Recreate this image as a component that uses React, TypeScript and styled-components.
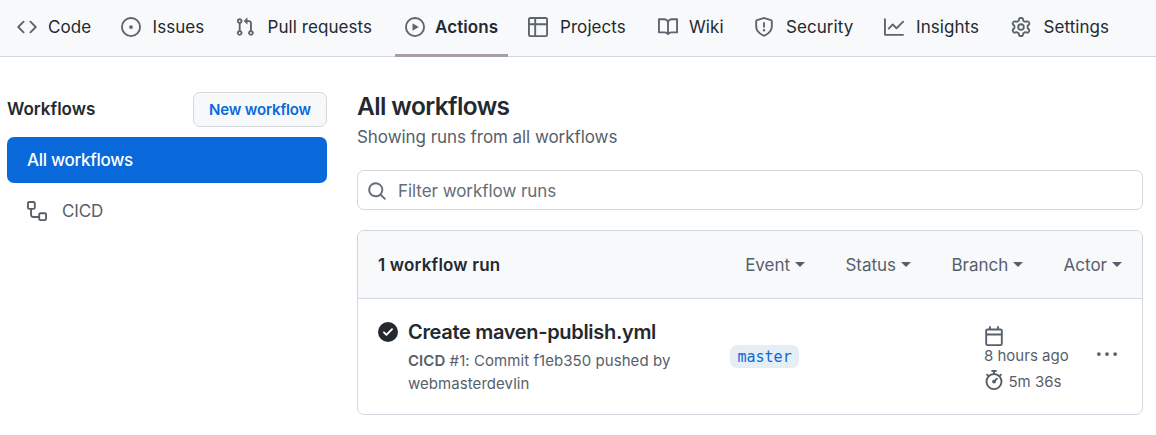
import React from "react";
import styled, { createGlobalStyle } from "styled-components";

const GlobalStyle = createGlobalStyle`
  * { box-sizing: border-box; }
  body {
    margin: 0;
    background: #fff;
    color: #24292f;
    font-family: Inter, "Liberation Sans", sans-serif;
    font-size: 17px;
    -webkit-font-smoothing: antialiased;
  }
  h1, h2, p { margin: 0; }
  button { font-family: inherit; }
`;

const paths = {
  code: "M4.72 3.22a.75.75 0 011.06 1.06L2.06 8l3.72 3.72a.75.75 0 11-1.06 1.06L.47 8.53a.75.75 0 010-1.06l4.25-4.25zm6.56 0a.75.75 0 10-1.06 1.06L13.94 8l-3.72 3.72a.75.75 0 101.06 1.06l4.25-4.25a.75.75 0 000-1.06l-4.25-4.25z",
  issue: "M8 9.5a1.5 1.5 0 100-3 1.5 1.5 0 000 3zM8 0a8 8 0 100 16A8 8 0 008 0zM1.5 8a6.5 6.5 0 1113 0 6.5 6.5 0 01-13 0z",
  pull: "M7.177 3.073L9.573.677A.25.25 0 0110 .854v4.792a.25.25 0 01-.427.177L7.177 3.427a.25.25 0 010-.354zM3.75 2.5a.75.75 0 100 1.5.75.75 0 000-1.5zm-2.25.75a2.25 2.25 0 113 2.122v5.256a2.251 2.251 0 11-1.5 0V5.372A2.25 2.25 0 011.5 3.25zM11 2.5h-1V4h1a1 1 0 011 1v5.628a2.251 2.251 0 101.5 0V5A2.5 2.5 0 0011 2.5zm1 10.25a.75.75 0 111.5 0 .75.75 0 01-1.5 0zM3.75 12a.75.75 0 100 1.5.75.75 0 000-1.5z",
  play: "M1.5 8a6.5 6.5 0 1113 0 6.5 6.5 0 01-13 0zM8 0a8 8 0 100 16A8 8 0 008 0zM6.379 5.227A.25.25 0 006 5.442v5.117a.25.25 0 00.379.214l4.264-2.559a.25.25 0 000-.428L6.379 5.227z",
  table: "M0 1.75C0 .784.784 0 1.75 0h12.5C15.216 0 16 .784 16 1.75v12.5A1.75 1.75 0 0114.25 16H1.75A1.75 1.75 0 010 14.25V1.75zM1.5 6.5v7.75c0 .138.112.25.25.25H5v-8H1.5zM5 5H1.5V1.75a.25.25 0 01.25-.25H5V5zm1.5 1.5v8h7.75a.25.25 0 00.25-.25V6.5h-8zm8-1.5h-8V1.5h7.75a.25.25 0 01.25.25V5z",
  book: "M0 1.75A.75.75 0 01.75 1h4.253c1.227 0 2.317.59 3 1.501A3.744 3.744 0 0111.006 1h4.245a.75.75 0 01.75.75v10.5a.75.75 0 01-.75.75h-4.507a2.25 2.25 0 00-1.591.659l-.622.621a.75.75 0 01-1.06 0l-.622-.621A2.25 2.25 0 005.258 13H.75a.75.75 0 01-.75-.75V1.75zm8.755 3a2.25 2.25 0 012.25-2.25H14.5v9h-3.757c-.71 0-1.4.201-1.992.572l.004-7.322zm-1.504 7.324l.004-5.073-.002-2.253A2.25 2.25 0 005.003 2.5H1.5v9h3.757a3.75 3.75 0 011.994.574z",
  shield: "M7.467.133a1.75 1.75 0 011.066 0l5.25 1.68A1.75 1.75 0 0115 3.48V7c0 1.566-.32 3.182-1.303 4.682-.983 1.498-2.585 2.813-5.032 3.855a1.7 1.7 0 01-1.33 0c-2.447-1.042-4.049-2.357-5.032-3.855C1.32 10.182 1 8.566 1 7V3.48a1.75 1.75 0 011.217-1.667l5.25-1.68zm.61 1.429a.25.25 0 00-.153 0l-5.25 1.68a.25.25 0 00-.174.238V7c0 1.358.275 2.666 1.057 3.86.784 1.194 2.121 2.34 4.366 3.297a.2.2 0 00.154 0c2.245-.956 3.582-2.104 4.366-3.298C13.225 9.666 13.5 8.36 13.5 7V3.48a.25.25 0 00-.174-.237l-5.25-1.68zM9 10.5a1 1 0 11-2 0 1 1 0 012 0zm-.25-5.75a.75.75 0 10-1.5 0v3a.75.75 0 001.5 0v-3z",
  graph: "M1.5 1.75a.75.75 0 00-1.5 0v12.5c0 .414.336.75.75.75h14.5a.75.75 0 000-1.5H1.5V1.75zm14.28 2.53a.75.75 0 00-1.06-1.06L10 7.94 7.53 5.47a.75.75 0 00-1.06 0L3.22 8.72a.75.75 0 001.06 1.06L7 7.06l2.47 2.47a.75.75 0 001.06 0l5.25-5.25z",
  gear: "M7.429 1.525a6.593 6.593 0 011.142 0c.036.003.108.036.137.146l.289 1.105c.147.56.55.967.997 1.189.174.086.341.183.501.29.417.278.97.423 1.53.27l1.102-.303c.11-.03.175.016.195.046.219.31.41.641.573.989.014.031.022.11-.059.19l-.815.806c-.411.406-.562.957-.53 1.456a4.588 4.588 0 010 .582c-.032.499.119 1.05.53 1.456l.815.806c.08.08.073.159.059.19a6.494 6.494 0 01-.573.99c-.02.029-.086.074-.195.045l-1.103-.303c-.559-.153-1.112-.008-1.529.27-.16.107-.327.204-.5.29-.449.222-.851.628-.998 1.189l-.289 1.105c-.029.11-.101.143-.137.146a6.613 6.613 0 01-1.142 0c-.036-.003-.108-.037-.137-.146l-.289-1.105c-.147-.56-.55-.967-.997-1.189a4.502 4.502 0 01-.501-.29c-.417-.278-.97-.423-1.53-.27l-1.102.303c-.11.03-.175-.016-.195-.046a6.492 6.492 0 01-.573-.989c-.014-.031-.022-.11.059-.19l.815-.806c.411-.406.562-.957.53-1.456a4.587 4.587 0 010-.582c.032-.499-.119-1.05-.53-1.456l-.815-.806c-.08-.08-.073-.159-.059-.19a6.44 6.44 0 01.573-.99c.02-.029.086-.075.195-.045l1.103.303c.559.153 1.112.008 1.529-.27.16-.107.327-.204.5-.29.449-.222.851-.628.998-1.189l.289-1.105c.029-.11.101-.143.137-.146zM8 0c-.236 0-.47.01-.701.03-.743.065-1.29.615-1.458 1.261l-.29 1.106c-.017.066-.078.158-.211.224a5.994 5.994 0 00-.668.386c-.123.082-.233.09-.3.071L3.27 2.776c-.644-.177-1.392.02-1.82.63a7.977 7.977 0 00-.704 1.217c-.315.675-.111 1.422.363 1.891l.815.806c.05.048.098.147.088.294a6.084 6.084 0 000 .772c.01.147-.038.246-.088.294l-.815.806c-.474.469-.678 1.216-.363 1.891.2.428.436.835.704 1.218.428.609 1.176.806 1.82.63l1.103-.303c.066-.019.176-.011.299.071.213.143.436.272.668.386.133.066.194.158.212.224l.289 1.106c.169.646.715 1.196 1.458 1.26a8.094 8.094 0 001.402 0c.743-.064 1.29-.614 1.458-1.26l.29-1.106c.017-.066.078-.158.211-.224a5.98 5.98 0 00.668-.386c.123-.082.233-.09.3-.071l1.102.302c.644.177 1.392-.02 1.82-.63.268-.382.505-.789.704-1.217.315-.675.111-1.422-.364-1.891l-.814-.806c-.05-.048-.098-.147-.088-.294a6.1 6.1 0 000-.772c-.01-.147.039-.246.088-.294l.814-.806c.475-.469.679-1.216.364-1.891a7.992 7.992 0 00-.704-1.218c-.428-.609-1.176-.806-1.82-.63l-1.103.303c-.066.019-.176.011-.299-.071a5.991 5.991 0 00-.668-.386c-.133-.066-.194-.158-.212-.224L10.16 1.29C9.99.645 9.444.095 8.701.031A8.094 8.094 0 008 0zm1.5 8a1.5 1.5 0 11-3 0 1.5 1.5 0 013 0zM11 8a3 3 0 11-6 0 3 3 0 016 0z",
  workflow: "M0 1.75C0 .784.784 0 1.75 0h3.5C6.216 0 7 .784 7 1.75v3.5A1.75 1.75 0 015.25 7H4v4a1 1 0 001 1h4v-1.25C9 9.784 9.784 9 10.75 9h3.5c.966 0 1.75.784 1.75 1.75v3.5A1.75 1.75 0 0114.25 16h-3.5A1.75 1.75 0 019 14.25v-.75H5A2.5 2.5 0 012.5 11V7h-.75A1.75 1.75 0 010 5.25V1.75zm1.75-.25a.25.25 0 00-.25.25v3.5c0 .138.112.25.25.25h3.5a.25.25 0 00.25-.25v-3.5a.25.25 0 00-.25-.25h-3.5zm9 9a.25.25 0 00-.25.25v3.5c0 .138.112.25.25.25h3.5a.25.25 0 00.25-.25v-3.5a.25.25 0 00-.25-.25h-3.5z",
  search: "M11.5 7a4.499 4.499 0 11-8.998 0A4.499 4.499 0 0111.5 7zm-.82 4.74a6 6 0 111.06-1.06l3.04 3.04a.75.75 0 11-1.06 1.06l-3.04-3.04z",
  check: "M8 16A8 8 0 108 0a8 8 0 000 16zm3.78-9.72a.75.75 0 00-1.06-1.06L6.75 9.19 5.28 7.72a.75.75 0 00-1.06 1.06l2 2a.75.75 0 001.06 0l4.5-4.5z",
  calendar: "M4.75 0a.75.75 0 01.75.75V2h5V.75a.75.75 0 011.5 0V2h1.25c.966 0 1.75.784 1.75 1.75v10.5A1.75 1.75 0 0113.25 16H2.75A1.75 1.75 0 011 14.25V3.75C1 2.784 1.784 2 2.75 2H4V.75A.75.75 0 014.75 0zm0 3.5h8.5a.25.25 0 01.25.25V6h-11V3.75a.25.25 0 01.25-.25h2zm-2.25 4v6.75c0 .138.112.25.25.25h10.5a.25.25 0 00.25-.25V7.5h-11z",
  stopwatch: "M5.75.75A.75.75 0 016.5 0h3a.75.75 0 010 1.5h-.75v1l-.001.041a6.718 6.718 0 013.464 1.435l.007-.006.75-.75a.75.75 0 111.06 1.06l-.75.75-.006.007a6.75 6.75 0 11-10.548 0L2.72 5.03l-.75-.75a.75.75 0 011.06-1.06l.75.75.007.006A6.718 6.718 0 017.25 2.541a.756.756 0 010-.041v-1H6.5a.75.75 0 01-.75-.75zM8 14.5A5.25 5.25 0 108 4a5.25 5.25 0 000 10.5zm.389-6.7l1.33-1.33a.75.75 0 111.061 1.06L9.45 8.861A1.502 1.502 0 018 10.75a1.5 1.5 0 11.389-2.95z",
  kebab: "M8 9.5a1.5 1.5 0 100-3 1.5 1.5 0 000 3zM1.5 9.5a1.5 1.5 0 100-3 1.5 1.5 0 000 3zm13 0a1.5 1.5 0 100-3 1.5 1.5 0 000 3z",
};

type IconName = keyof typeof paths;

const Svg = styled.svg`
  display: block;
  flex: none;
  width: 20px;
  height: 20px;
  fill: currentColor;
`;

const Icon = ({ name }: { name: IconName }) => (
  <Svg viewBox="0 0 16 16" aria-hidden="true">
    <path fillRule="evenodd" d={paths[name]} />
  </Svg>
);

const Nav = styled.nav`
  display: flex;
  gap: 10px;
  height: 57px;
  padding-left: 7px;
  background: #f7f9fb;
  border-bottom: 1px solid #d0d7de;
`;

const Tab = styled.a<{ $width: number; $gap: number; $active?: boolean }>`
  display: flex;
  align-items: center;
  flex: none;
  gap: ${(p) => p.$gap}px;
  width: ${(p) => p.$width}px;
  height: 57px;
  padding: 0 0 ${(p) => (p.$active ? 0 : 3)}px 10px;
  border-bottom: ${(p) => (p.$active ? "3px solid #a59ea4" : "0")};
  border-radius: 1px;
  white-space: nowrap;
  font-weight: ${(p) => (p.$active ? 600 : 400)};
  letter-spacing: ${(p) => (p.$active ? 0.1 : 0.07)}px;

  svg { color: #5c656d; }
`;

const Layout = styled.main`
  display: grid;
  grid-template-columns: 320px 786px;
  column-gap: 30px;
  padding: 35px 0 0 7px;
`;

const SideHead = styled.div`
  display: flex;
  align-items: center;
  justify-content: space-between;
  height: 35px;
  margin-bottom: 10px;
`;

const SideTitle = styled.h2`
  padding-bottom: 2px;
  font-size: 17px;
  font-weight: 600;
`;

const NewButton = styled.button`
  width: 134px;
  height: 35px;
  padding: 0;
  border: 1px solid #d3d8dd;
  border-radius: 7px;
  background: #f6f8fa;
  color: #0969da;
  font-size: 15px;
  font-weight: 600;
  letter-spacing: -0.15px;
  white-space: nowrap;
`;

const SideItem = styled.a<{ $active?: boolean }>`
  display: flex;
  align-items: center;
  gap: 15px;
  height: 46px;
  margin-bottom: 5px;
  padding-left: 20px;
  border-radius: 7px;
  background: ${(p) => (p.$active ? "#0969da" : "transparent")};
  color: ${(p) => (p.$active ? "#fff" : "#57606a")};
  font-weight: ${(p) => (p.$active ? 500 : 400)};
  letter-spacing: ${(p) => (p.$active ? -0.28 : -0.1)}px;
`;

const PageTitle = styled.h1`
  margin-top: -1px;
  font-size: 24.5px;
  line-height: 30px;
  font-weight: 600;
  letter-spacing: -0.62px;
`;

const Subtitle = styled.p`
  margin-top: 5px;
  line-height: 22px;
  letter-spacing: -0.06px;
  color: #57606a;
`;

const Filter = styled.div`
  display: flex;
  align-items: center;
  gap: 11px;
  height: 40px;
  margin: 22px 0 20px;
  padding: 2px 0 0 9px;
  border: 1px solid #d0d7de;
  border-radius: 7px;
  color: #656d76;
  letter-spacing: -0.05px;
`;

const Runs = styled.section`
  height: 185px;
  border: 1px solid #d0d7de;
  border-radius: 7px;
  overflow: hidden;
`;

const RunsHead = styled.header`
  display: flex;
  align-items: center;
  height: 68px;
  padding: 0 20px;
  background: #f7f9fb;
  border-bottom: 1px solid #d0d7de;
`;

const Count = styled.strong`
  flex: 1;
  font-weight: 600;
  letter-spacing: 0.18px;
`;

const Menu = styled.span`
  display: flex;
  align-items: center;
  gap: 5px;
  margin-left: 40.3px;
  color: #57606a;

  &::after {
    content: "";
    border: 5px solid transparent;
    border-top-color: currentColor;
    border-bottom: 0;
  }
`;

const Run = styled.article`
  display: grid;
  grid-template-columns: 30px 322px 254px 113px 22px;
  height: 115px;
  padding: 19px 0 0 20px;
`;

const Status = styled.span`
  padding-top: 4px;
`;

const RunTitle = styled.h2`
  font-size: 20px;
  line-height: 28px;
  font-weight: 600;
  letter-spacing: -0.32px;
  white-space: nowrap;
`;

const RunMeta = styled.p`
  width: 280px;
  margin-top: 3px;
  color: #57606a;
  font-size: 15px;
  line-height: 23px;
  letter-spacing: 0.06px;
`;

const Workflow = styled.b`
  font-weight: 600;
`;

const Branch = styled.code`
  justify-self: start;
  height: 23px;
  margin-top: 27px;
  padding: 0 7.5px;
  border-radius: 7px;
  background: #e6eef5;
  color: #0969da;
  font-family: "DejaVu Sans Mono", monospace;
  font-size: 15px;
  line-height: 24px;
`;

const Timing = styled.div`
  padding-top: 8px;
  color: #57606a;
  font-size: 15px;
  line-height: 20px;
  white-space: nowrap;
`;

const Duration = styled.div`
  display: flex;
  align-items: flex-start;
  gap: 4.5px;
  margin-top: 4px;

  span { padding-top: 2px; }
`;

const More = styled.span`
  padding-top: 26px;
  color: #57606a;
`;

const tabs: { icon: IconName; label: string; width: number; gap: number; active?: boolean }[] = [
  { icon: "code", label: "Code", width: 94, gap: 11 },
  { icon: "issue", label: "Issues", width: 104, gap: 11.5 },
  { icon: "pull", label: "Pull requests", width: 160, gap: 12.5 },
  { icon: "play", label: "Actions", width: 113, gap: 10, active: true },
  { icon: "table", label: "Projects", width: 120, gap: 12 },
  { icon: "book", label: "Wiki", width: 86, gap: 11 },
  { icon: "shield", label: "Security", width: 120, gap: 12 },
  { icon: "graph", label: "Insights", width: 117, gap: 12 },
  { icon: "gear", label: "Settings", width: 119, gap: 12.5 },
];

export default function App() {
  return (
    <>
      <GlobalStyle />
      <Nav>
        {tabs.map((t) => (
          <Tab key={t.label} $width={t.width} $gap={t.gap} $active={t.active}>
            <Icon name={t.icon} />
            <span>{t.label}</span>
          </Tab>
        ))}
      </Nav>
      <Layout>
        <aside>
          <SideHead>
            <SideTitle>Workflows</SideTitle>
            <NewButton>New workflow</NewButton>
          </SideHead>
          <SideItem $active>All workflows</SideItem>
          <SideItem>
            <Icon name="workflow" />
            CICD
          </SideItem>
        </aside>
        <div>
          <PageTitle>All workflows</PageTitle>
          <Subtitle>Showing runs from all workflows</Subtitle>
          <Filter>
            <Icon name="search" />
            Filter workflow runs
          </Filter>
          <Runs>
            <RunsHead>
              <Count>1 workflow run</Count>
              {["Event", "Status", "Branch", "Actor"].map((m) => (
                <Menu key={m}>{m}</Menu>
              ))}
            </RunsHead>
            <Run>
              <Status>
                <Icon name="check" />
              </Status>
              <div>
                <RunTitle>Create maven-publish.yml</RunTitle>
                <RunMeta>
                  <Workflow>CICD</Workflow> #1: Commit f1eb350 pushed by webmasterdevlin
                </RunMeta>
              </div>
              <Branch>master</Branch>
              <Timing>
                <Icon name="calendar" />
                8 hours ago
                <Duration>
                  <Icon name="stopwatch" />
                  <span>5m 36s</span>
                </Duration>
              </Timing>
              <More>
                <Icon name="kebab" />
              </More>
            </Run>
          </Runs>
        </div>
      </Layout>
    </>
  );
}
